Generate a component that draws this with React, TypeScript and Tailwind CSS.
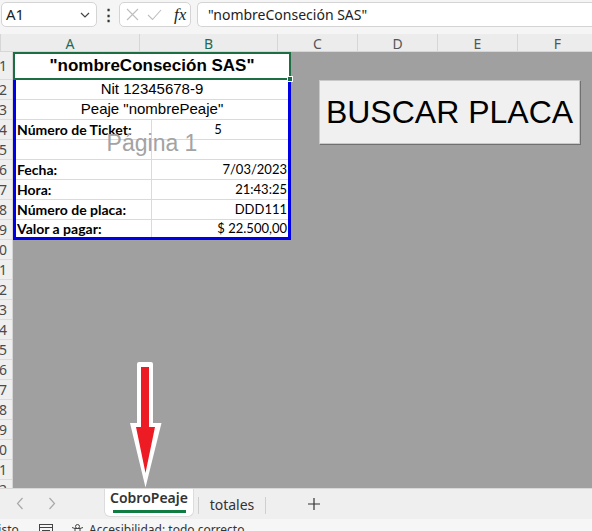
import React from 'react';

const ui = { fontFamily: '"Noto Sans", "Open Sans", sans-serif' };
const arial = { fontFamily: '"Liberation Sans", Arial, sans-serif' };
const cal = { fontFamily: 'Lato, "Noto Sans", sans-serif' };

const columns = [
  { name: 'A', w: 'w-[139px]', active: true },
  { name: 'B', w: 'w-[138px]', active: true },
  { name: 'C', w: 'w-[80px]', active: false },
  { name: 'D', w: 'w-[80px]', active: false },
  { name: 'E', w: 'w-[80px]', active: false },
  { name: 'F', w: 'w-[80px]', active: false },
];

const rowNumbers = Array.from({ length: 22 }, (_, i) => i + 1);

type Row = { merged?: string; label?: string; value?: string; center?: boolean };

const rows: Row[] = [
  { merged: 'Nit 12345678-9' },
  { merged: 'Peaje "nombrePeaje"' },
  { label: 'Número de Ticket:', value: '5', center: true },
  { label: '', value: '' },
  { label: 'Fecha:', value: '7/03/2023' },
  { label: 'Hora:', value: '21:43:25' },
  { label: 'Número de placa:', value: 'DDD111' },
  { label: 'Valor a pagar:', value: '$ 22.500,00' },
];

const FormulaBar: React.FC = () => (
  <div className="h-[34px] bg-[#f5f5f5] flex items-start pt-[2px] shrink-0">
    {/* Name box */}
    <div className="ml-[1px] w-[96px] h-[25px] bg-white border border-[#d4d4d4] rounded-[5px] flex items-center justify-between pl-[4px] pr-[6px]">
      <span className="text-[15px] text-[#222]" style={ui}>A1</span>
      <svg width="10" height="6" viewBox="0 0 10 6" fill="none" stroke="#444" strokeWidth="1.2">
        <path d="M1 1l4 4 4-4" />
      </svg>
    </div>
    <div className="w-[22px] h-[25px] flex items-center justify-center text-[#333] text-[15px] font-bold" style={ui}>
      ⋮
    </div>
    {/* cancel / enter / fx */}
    <div className="w-[72px] h-[25px] bg-white border border-[#d4d4d4] rounded-[5px] flex items-center pl-[6px] gap-[8px]">
      <svg width="13" height="13" viewBox="0 0 13 13" stroke="#bdbdbd" strokeWidth="1.1">
        <path d="M1 1l11 11M12 1L1 12" />
      </svg>
      <svg width="15" height="12" viewBox="0 0 15 12" fill="none" stroke="#bdbdbd" strokeWidth="1.1">
        <path d="M1 6l4.5 4.5L14 1" />
      </svg>
      <span className="text-[17px] italic text-[#222] leading-none ml-[4px]" style={{ fontFamily: '"Liberation Serif", serif' }}>
        fx
      </span>
    </div>
    <div className="ml-[6px] flex-1 h-[25px] bg-white border border-r-0 border-[#d4d4d4] rounded-l-[5px] flex items-center pl-[10px]">
      <span className="text-[14px] text-[#222]" style={ui}>"nombreConseción SAS"</span>
    </div>
  </div>
);

const ColumnHeader: React.FC = () => (
  <div className="h-[18px] bg-[#ececec] flex shrink-0 border-b border-[#d6d6d6]">
    <div className="w-[13px] h-full border-r border-[#d6d6d6] relative">
      <svg className="absolute right-[1px] bottom-[1px]" width="9" height="9" viewBox="0 0 9 9">
        <path d="M9 0V9H0z" fill="#d2d2d2" />
      </svg>
    </div>
    {columns.map((c) => (
      <div
        key={c.name}
        className={`${c.w} shrink-0 h-full border-r border-[#d6d6d6] flex items-center justify-center pt-[1px] text-[14px] ${
          c.active ? 'text-[#1d6b57]' : 'text-[#555]'
        }`}
        style={ui}
      >
        {c.name}
      </div>
    ))}
  </div>
);

const RowHeader: React.FC = () => (
  <div className="w-[13px] shrink-0 bg-[#efefef] border-r border-[#d6d6d6] overflow-hidden">
    {rowNumbers.map((n) => (
      <div
        key={n}
        className={`${n === 1 ? 'h-[28px]' : 'h-[20px]'} flex items-center justify-end pr-[5px] border-b border-[#dcdcdc] text-[14px] text-[#4a4a4a]`}
        style={ui}
      >
        <span className="whitespace-nowrap">{n}</span>
      </div>
    ))}
  </div>
);

const PrintArea: React.FC = () => (
  <div className="w-[278px]">
    {/* Row 1: merged title with selection */}
    <div className="h-[28px] bg-white border-2 border-[#1e6e44] flex items-center justify-center relative">
      <span className="text-[17px] font-bold text-black" style={arial}>
        "nombreConseción SAS"
      </span>
      <div className="absolute -right-[4px] -bottom-[4px] w-[6px] h-[6px] bg-[#1e6e44] border border-white" />
    </div>
    <div className="bg-white border-x-[3px] border-b-[3px] border-[#0000e6]">
      {rows.map((r, i) => {
        const last = i === rows.length - 1;
        const h = last ? 'h-[17px]' : 'h-[20px] border-b border-[#dadada]';
        if (r.merged) {
          return (
            <div key={i} className={`${h} flex items-center justify-center text-[15px] text-black`} style={arial}>
              {r.merged}
            </div>
          );
        }
        return (
          <div key={i} className={`${h} flex text-black`} style={cal}>
            <div className="w-[136px] border-r border-[#dadada] flex items-center pl-[1px] text-[14px] font-bold whitespace-nowrap">
              {r.label}
            </div>
            <div
              className={`flex-1 flex items-center text-[13px] ${r.center ? 'justify-center pr-[4px]' : 'justify-end pr-[1px]'}`}
            >
              {r.value}
            </div>
          </div>
        );
      })}
    </div>
  </div>
);

const Arrow: React.FC = () => (
  <svg className="absolute left-[117px] top-[310px]" width="32" height="126" viewBox="0 0 32 126">
    <path d="M7 2Q7 0 9 0L21 0Q23 0 23 2L23 61L31.5 61L15.5 125.5L0 61L7 61Z" fill="#fff" />
    <path d="M11 5L19 5L19 65L25 65L15.5 111L6 65L11 65Z" fill="#ed1c24" />
  </svg>
);

const Sheet: React.FC = () => (
  <div className="flex-1 flex min-h-0">
    <RowHeader />
    <div className="flex-1 bg-[#a0a0a0] relative overflow-hidden">
      <PrintArea />
      {/* page watermark */}
      <div className="absolute left-0 top-[80px] w-[278px] text-center text-[23px] leading-none text-[#a3a3a3]" style={arial}>
        Página 1
      </div>
      {/* macro button */}
      <div className="absolute left-[306px] top-[28px] w-[261px] h-[64px] bg-[#f0f0f0] border border-[#c9c9c9] shadow-[1px_1px_0_#707070] flex items-center justify-center">
        <span className="text-[32px] text-black leading-none" style={arial}>
          BUSCAR PLACA
        </span>
      </div>
      <Arrow />
    </div>
  </div>
);

const TabBar: React.FC = () => (
  <div className="h-[31px] bg-[#efefef] border-t border-[#d8d8d8] flex items-start shrink-0">
    <div className="w-[104px] h-[28px] flex items-center pl-[16px] gap-[24px]">
      <svg width="8" height="13" viewBox="0 0 8 13" fill="none" stroke="#a8a8a8" strokeWidth="1.2">
        <path d="M6.5 1L1.5 6.5l5 5.5" />
      </svg>
      <svg width="8" height="13" viewBox="0 0 8 13" fill="none" stroke="#a8a8a8" strokeWidth="1.2">
        <path d="M1.5 1l5 5.5-5 5.5" />
      </svg>
    </div>
    <div className="w-[90px] h-[28px] bg-white rounded-b-[6px] border border-t-0 border-[#dcdcdc] flex flex-col items-center justify-end pb-[3px]">
      <span className="text-[14px] font-semibold text-[#333] leading-none" style={ui}>
        CobroPeaje
      </span>
      <div className="w-[73px] h-[3px] bg-[#107c41] mt-[5px]" />
    </div>
    <div className="w-px h-[17px] bg-[#cfcfcf] mt-[8px] ml-[4px]" />
    <div className="w-[66px] h-[28px] flex items-center justify-center pt-[2px]">
      <span className="text-[14px] text-[#333]" style={ui}>totales</span>
    </div>
    <div className="w-px h-[17px] bg-[#cfcfcf] mt-[8px]" />
    <div className="w-[96px] h-[28px] flex items-center justify-center pt-[2px]">
      <svg width="12" height="12" viewBox="0 0 12 12" stroke="#333" strokeWidth="1.2">
        <path d="M6 0v12M0 6h12" />
      </svg>
    </div>
  </div>
);

const StatusBar: React.FC = () => (
  <div className="h-[12px] bg-[#f6f6f6] overflow-hidden relative shrink-0">
    <div className="flex items-start pt-[5px] text-[12px] text-[#333] leading-none" style={ui}>
      <span className="-ml-[8px] w-[47px]">Listo</span>
      <svg width="14" height="12" viewBox="0 0 14 12" fill="none" stroke="#444" strokeWidth="1">
        <rect x="0.5" y="0.5" width="13" height="11" />
        <path d="M0.5 3.5h13M3 6.5h8" />
      </svg>
      <svg className="ml-[18px]" width="13" height="12" viewBox="0 0 13 12" fill="none" stroke="#444" strokeWidth="1">
        <circle cx="6.5" cy="2.5" r="2" />
        <path d="M1 3.5l3 1h5l3-1M4 4.5v3M9 4.5v3" />
      </svg>
      <span className="ml-[5px]">Accesibilidad: todo correcto</span>
    </div>
  </div>
);

export default function App() {
  return (
    <div className="w-[592px] h-[531px] overflow-hidden flex flex-col bg-white">
      <FormulaBar />
      <ColumnHeader />
      <Sheet />
      <TabBar />
      <StatusBar />
    </div>
  );
}
